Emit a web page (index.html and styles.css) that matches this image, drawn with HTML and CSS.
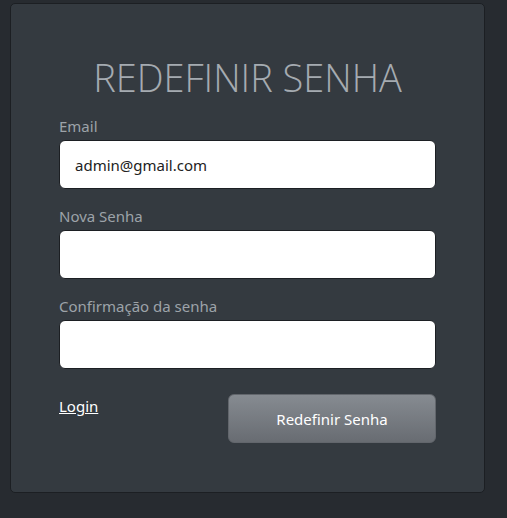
FILE: index.html
```html
<!DOCTYPE html>
<html lang="pt-BR">
<head>
<meta charset="utf-8">
<title>Redefinir Senha</title>
<link rel="stylesheet" href="styles.css">
</head>
<body>
<div class="card">
  <h1 class="title">REDEFINIR SENHA</h1>
  <form class="form">
    <div class="field">
      <label class="label">Email</label>
      <input class="input" type="text" value="admin@gmail.com">
    </div>
    <div class="field">
      <label class="label">Nova Senha</label>
      <input class="input" type="password">
    </div>
    <div class="field">
      <label class="label">Confirmação da senha</label>
      <input class="input" type="password">
    </div>
    <div class="actions">
      <a class="link" href="#">Login</a>
      <button class="btn" type="button">Redefinir Senha</button>
    </div>
  </form>
</div>
</body>
</html>
```
FILE: styles.css
```css
html, body {
  margin: 0;
  padding: 0;
  background: #272b30;
  height: 100%;
}
body {
  font-family: "Noto Sans", "Open Sans", sans-serif;
  overflow: hidden;
}
.card {
  box-sizing: border-box;
  margin: 3px 0 0 10px;
  width: 475px;
  height: 490px;
  background: #343a40;
  border: 1px solid #1c1f23;
  border-radius: 5px;
  padding: 50px 48px 0 48px;
}
.title {
  margin: 0 0 18px 0;
  text-align: center;
  font-family: "Open Sans", "Noto Sans", sans-serif;
  font-weight: 300;
  font-size: 38px;
  line-height: 46px;
  color: #a5abb1;
  letter-spacing: 0;
}
.form {
  display: flex;
  flex-direction: column;
}
.field {
  display: flex;
  flex-direction: column;
  margin-bottom: 19px;
}
.label {
  font-size: 15px;
  line-height: 16px;
  color: #9da3a9;
  margin-bottom: 6px;
}
.input {
  box-sizing: border-box;
  height: 49px;
  width: 100%;
  border: 1px solid #1c1f23;
  border-radius: 6px;
  background: #fff;
  padding: 0 15px;
  font-family: "Noto Sans", "Open Sans", sans-serif;
  font-size: 15px;
  color: #222;
  outline: none;
}
.actions {
  display: flex;
  justify-content: space-between;
  align-items: flex-start;
  margin-top: 6px;
}
.link {
  color: #fff;
  font-size: 15px;
  line-height: 20px;
  text-decoration: underline;
  margin-top: 2px;
}
.btn {
  width: 208px;
  height: 49px;
  border: 1px solid #62666c;
  border-radius: 6px;
  background: linear-gradient(#868b91, #686c72);
  color: #fff;
  font-family: "Noto Sans", "Open Sans", sans-serif;
  font-size: 15px;
}
```
